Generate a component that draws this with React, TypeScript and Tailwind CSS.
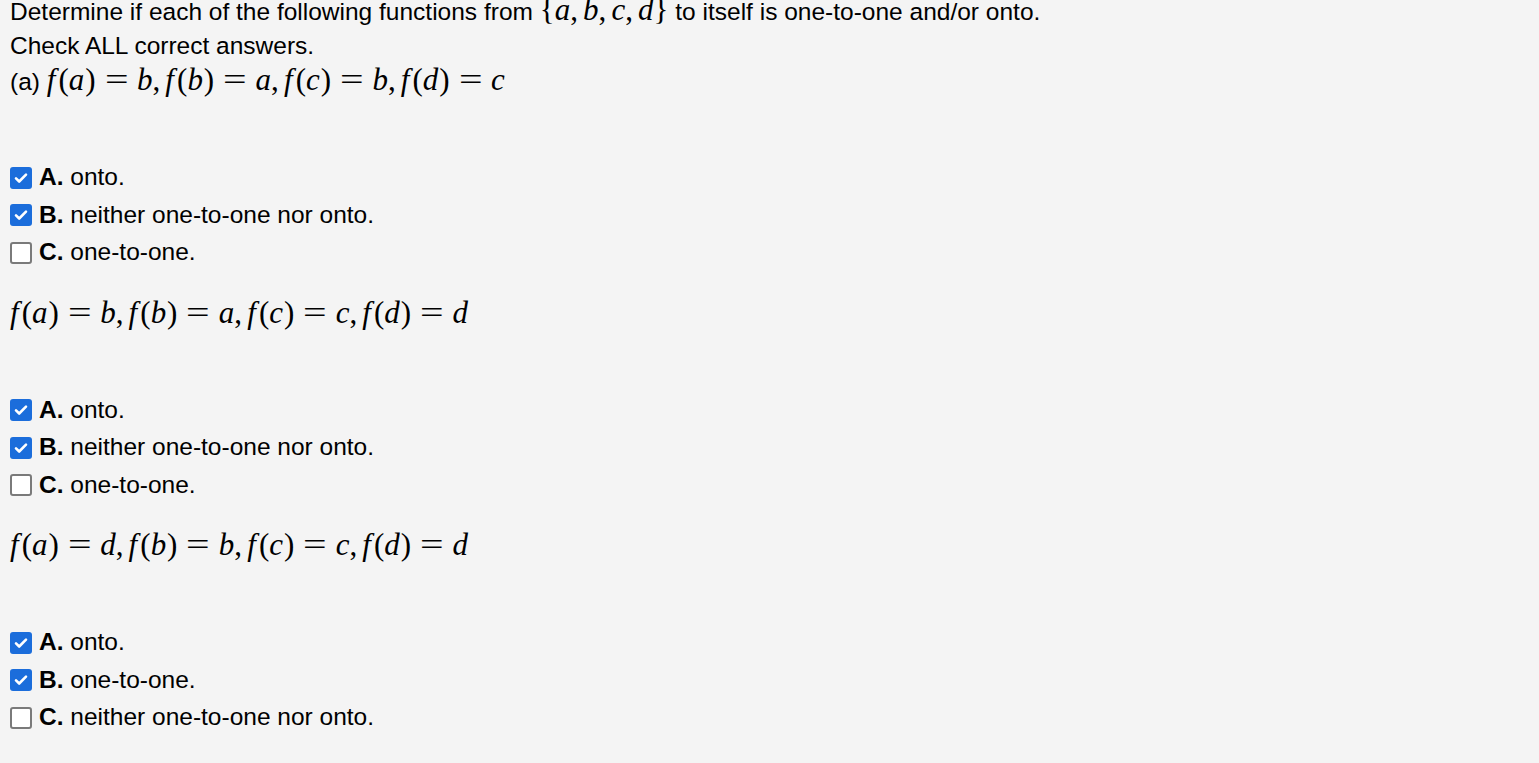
import React from "react";

type Choice = { label: string; text: string; checked: boolean };
type Part = { prefix?: string; values: string[]; choices: Choice[] };

const parts: Part[] = [
  {
    prefix: "(a) ",
    values: ["b", "a", "b", "c"],
    choices: [
      { label: "A.", text: "onto.", checked: true },
      { label: "B.", text: "neither one-to-one nor onto.", checked: true },
      { label: "C.", text: "one-to-one.", checked: false },
    ],
  },
  {
    values: ["b", "a", "c", "d"],
    choices: [
      { label: "A.", text: "onto.", checked: true },
      { label: "B.", text: "neither one-to-one nor onto.", checked: true },
      { label: "C.", text: "one-to-one.", checked: false },
    ],
  },
  {
    values: ["d", "b", "c", "d"],
    choices: [
      { label: "A.", text: "onto.", checked: true },
      { label: "B.", text: "one-to-one.", checked: true },
      { label: "C.", text: "neither one-to-one nor onto.", checked: false },
    ],
  },
];

const mathFont = { fontFamily: '"Liberation Serif", "DejaVu Serif", serif' };

function V({ c }: { c: string }) {
  return <span className="italic">{c}</span>;
}

function Equals() {
  return (
    <span className="inline-block mx-[0.2778em] w-[0.78em] text-center">
      <span className="inline-block scale-x-[1.35]">=</span>
    </span>
  );
}

function Comma() {
  return <span className="mr-[0.1667em]">,</span>;
}

function Math({ children }: { children: React.ReactNode }) {
  return (
    <span className="text-[31px] whitespace-nowrap" style={mathFont}>
      {children}
    </span>
  );
}

function FunctionDef({ values }: { values: string[] }) {
  const args = ["a", "b", "c", "d"];
  return (
    <Math>
      {args.map((a, i) => (
        <span key={a}>
          <V c="f" />
          <span className="ml-[0.1em]">(</span>
          <V c={a} />
          <span className="ml-[0.03em]">)</span>
          <Equals />
          <V c={values[i]} />
          {i < 3 && <Comma />}
        </span>
      ))}
    </Math>
  );
}

function Checkbox({ checked }: { checked: boolean }) {
  if (checked) {
    return (
      <span className="w-[22px] h-[22px] rounded-[3px] bg-[#1b6ddb] flex items-center justify-center shrink-0">
        <svg width="16" height="16" viewBox="0 0 16 16" fill="none">
          <path d="M3 8.3l3.2 3.2L13 4.6" stroke="white" strokeWidth="2.6" strokeLinecap="round" strokeLinejoin="round" />
        </svg>
      </span>
    );
  }
  return <span className="w-[22px] h-[22px] rounded-[3px] border-2 border-[#7a7a7a] bg-white shrink-0" />;
}

export default function App() {
  return (
    <div
      className="min-h-screen bg-[#f4f4f4] text-black px-[10px] text-[24.5px]"
      style={{ fontFamily: '"Liberation Sans", Arial, sans-serif' }}
    >
      <p className="leading-[20px]">
        Determine if each of the following functions from{" "}
        <Math>
          {"{"}
          <V c="a" />
          <Comma />
          <V c="b" />
          <Comma />
          <V c="c" />
          <Comma />
          <V c="d" />
          {"}"}
        </Math>{" "}
        to itself is one-to-one and/or onto.
      </p>
      <p className="leading-[34px] mt-[7px]">Check ALL correct answers.</p>

      {parts.map((part, idx) => (
        <div key={idx} className={idx === 0 ? "" : "mt-[24px]"}>
          <p className="leading-[34px]">
            {part.prefix}
            <FunctionDef values={part.values} />
          </p>
          <div className="mt-[60px] flex flex-col">
            {part.choices.map((c) => (
              <label key={c.label} className="flex items-center gap-[7px] h-[37.5px]">
                <Checkbox checked={c.checked} />
                <span>
                  <b>{c.label}</b> {c.text}
                </span>
              </label>
            ))}
          </div>
        </div>
      ))}
    </div>
  );
}
